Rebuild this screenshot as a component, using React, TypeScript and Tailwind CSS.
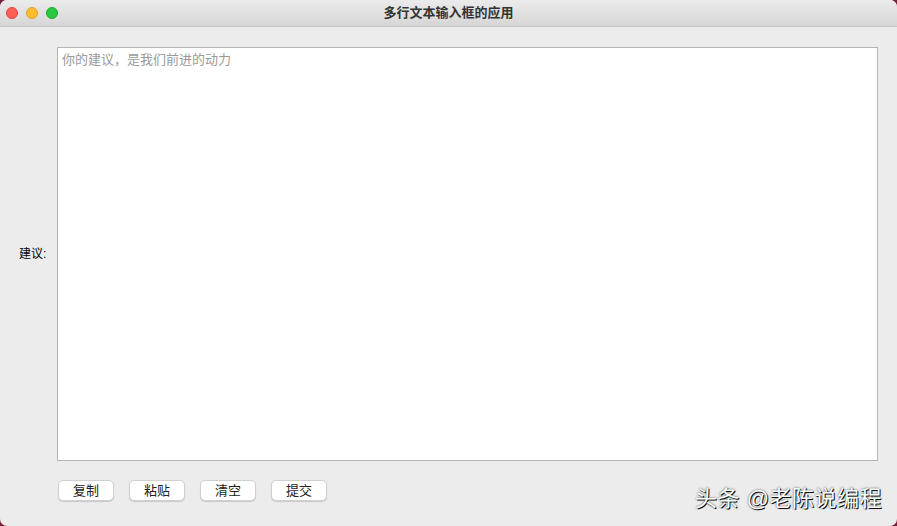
const FONT = "font-['Liberation_Sans','Noto_Sans_CJK_SC',sans-serif]";

function TrafficLights() {
  return (
    <div className="flex items-center gap-2 pl-[6px]">
      <span className="h-3 w-3 rounded-full border border-[#e0443e] bg-[#fe5f57]" />
      <span className="h-3 w-3 rounded-full border border-[#dea123] bg-[#febc2e]" />
      <span className="h-3 w-3 rounded-full border border-[#1aab29] bg-[#28c840]" />
    </div>
  );
}

function Btn({ label }: { label: string }) {
  return (
    <button
      type="button"
      className="h-[21px] w-[56px] rounded-[5px] border border-[#d0d0d0] bg-white text-[13px] leading-none text-[#222] shadow-[0_1px_1px_rgba(0,0,0,0.15)]"
    >
      {label}
    </button>
  );
}

export default function App() {
  return (
    <div className={`h-[526px] w-[897px] bg-[#7a1f3a] ${FONT}`}>
      <div className="flex h-full w-full flex-col overflow-hidden rounded-[7px] bg-[#ececec]">
        <div className="relative flex h-[27px] shrink-0 items-center border-b border-[#c4c4c4] bg-gradient-to-b from-[#ebebeb] to-[#d6d6d6]">
          <TrafficLights />
          <div className="absolute inset-0 flex items-center justify-center text-[13px] font-semibold text-[#333]">
            多行文本输入框的应用
          </div>
        </div>
        <div className="flex flex-1 flex-col px-[19px] pt-[20px]">
          <div className="flex items-center">
            <label className="w-[38px] text-[12px] text-black">建议:</label>
            <textarea
              placeholder="你的建议，是我们前进的动力"
              className="h-[414px] flex-1 resize-none border border-[#b4b4b4] bg-white px-[4px] py-[2px] text-[13px] text-[#222] outline-none placeholder:text-[#9a9a9a]"
            />
          </div>
          <div className="relative mt-[19px] flex items-center gap-[15px] pl-[39px]">
            <Btn label="复制" />
            <Btn label="粘贴" />
            <Btn label="清空" />
            <Btn label="提交" />
            <div className="absolute right-[-4px] top-[2px] text-[22px] tracking-[0.5px] text-white [text-shadow:1px_1px_0_#111,0_0_2px_#333]">
              头条 @老陈说编程
            </div>
          </div>
        </div>
      </div>
    </div>
  );
}
